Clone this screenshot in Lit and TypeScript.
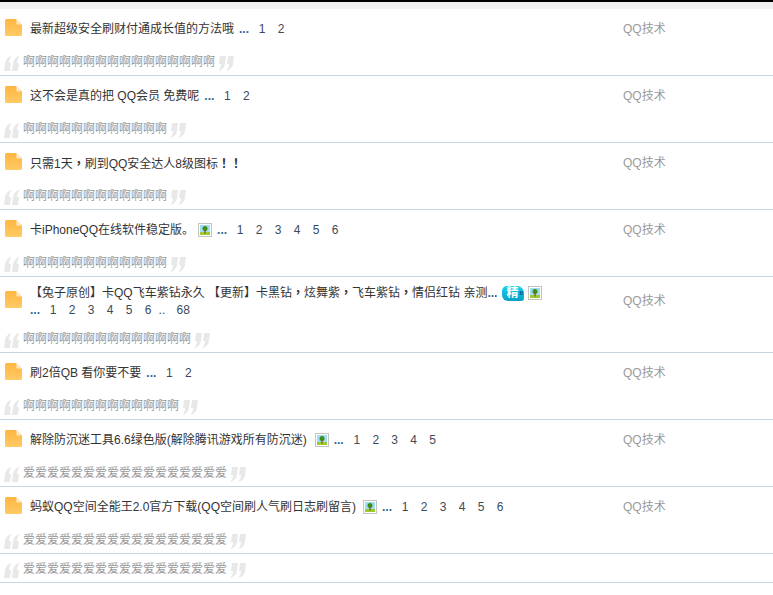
import { LitElement, html, css, svg } from "lit";
import { customElement } from "lit/decorators.js";

interface Row {
  title: string;
  ellipsis?: boolean;
  pic?: boolean;
  picGap?: number;
  badge?: boolean;
  pages?: string[];
  wrapPages?: boolean;
  quote: string;
  tall?: boolean;
}

const A = "啊";
const L = "爱";
const rows: Row[] = [
  { title: "最新超级安全刷财付通成长值的方法哦", pages: ["1", "2"], quote: A.repeat(16) },
  { title: "这不会是真的把 QQ会员 免费呢", pages: ["1", "2"], quote: A.repeat(12) },
  { title: "只需1天，刷到QQ安全达人8级图标！！", quote: A.repeat(12) },
  { title: "卡iPhoneQQ在线软件稳定版。", pic: true, picGap: 4, pages: ["1", "2", "3", "4", "5", "6"], quote: A.repeat(12) },
  {
    title: "【兔子原创】卡QQ飞车紫钻永久 【更新】卡黑钻，炫舞紫，飞车紫钻，情侣红钻 亲测",
    ellipsis: true,
    badge: true,
    pic: true,
    picGap: 4,
    wrapPages: true,
    tall: true,
    pages: ["1", "2", "3", "4", "5", "6", "..", "68"],
    quote: A.repeat(14),
  },
  { title: "刷2倍QB 看你要不要", pages: ["1", "2"], quote: A.repeat(13) },
  { title: "解除防沉迷工具6.6绿色版(解除腾讯游戏所有防沉迷)", pic: true, picGap: 8, pages: ["1", "2", "3", "4", "5"], quote: L.repeat(17) },
  { title: "蚂蚁QQ空间全能王2.0官方下载(QQ空间刷人气刷日志刷留言)", pic: true, picGap: 7, pages: ["1", "2", "3", "4", "5", "6"], quote: L.repeat(17) },
];

const openMark = "M0 15L1 7C1.500 4 4 1 7 0L7 1C5.500 3 5 5 5 7H7L6 15Z";
const quoteOpen = svg`<svg class="q" width="15" height="15" viewBox="0 0 15 15"><path d="${openMark}" fill="#e8e8e8"/><path d="${openMark}" transform="translate(8 0)" fill="#e8e8e8"/></svg>`;
const quoteClose = svg`<svg class="q" width="15" height="15" viewBox="0 0 15 15"><g transform="rotate(180 7.500 7.500)"><path d="${openMark}" fill="#e8e8e8"/><path d="${openMark}" transform="translate(8 0)" fill="#e8e8e8"/></g></svg>`;
const folder = svg`<svg class="folder" width="17" height="17" viewBox="0 0 17 17"><defs><linearGradient id="fg" x1="0" y1="0" x2="0" y2="1"><stop offset="0" stop-color="#ffb640"/><stop offset="1" stop-color="#ffca66"/></linearGradient></defs><path d="M1.500 0H11l6 5.500v10a1.500 1.500 0 0 1-1.500 1.500h-14A1.500 1.500 0 0 1 0 15.500v-14A1.500 1.500 0 0 1 1.500 0z" fill="url(#fg)"/><path d="M11.500 0.500L16.500 5.500h-5z" fill="#fdeccb"/></svg>`;
const pic = svg`<svg width="14" height="14" viewBox="0 0 14 14"><rect x=".5" y=".5" width="13" height="13" fill="#fff" stroke="#c4c4bc"/><rect x="2" y="2" width="10" height="7" fill="#9fdcf5"/><rect x="2" y="9" width="10" height="3" fill="#9acb30"/><circle cx="7" cy="5.500" r="2.500" fill="#3f8f17"/><rect x="6.300" y="7" width="1.400" height="3.500" fill="#8a5a20"/></svg>`;

@customElement("app-root")
export class AppRoot extends LitElement {
  static styles = css`
    :host {
      display: block;
      height: 595px;
      overflow: hidden;
      background: #fff;
      font: 12px/18px "Liberation Sans", "Noto Sans CJK SC", sans-serif;
      color: #333;
      border-top: 2px solid #000;
      box-sizing: border-box;
    }
    .strip { height: 7px; background: #f0f0f0; }
    .row {
      height: 66px;
      border-bottom: 1px solid #c5d5e3;
      display: flex;
      flex-direction: column;
      overflow: hidden;
    }
    .row.tall { height: 75px; }
    .row.short { height: 28px; justify-content: center; }
    .top {
      height: 38px;
      display: flex;
      align-items: center;
      padding-left: 5px;
      flex: none;
    }
    .tall .top { height: 46px; }
    .tall .quote { margin-top: 7px; }
    .folder { flex: none; margin-right: 8px; margin-top: -1px; }
    .subject { width: 593px; flex: none; padding-top: 2px; }
    .line { display: block; height: 18px; white-space: nowrap; }
    .author { color: #999; padding-top: 2px; }
    .picwrap { display: inline-block; vertical-align: -3px; height: 14px; line-height: 0; }
    .more { color: #369; font-weight: bold; margin-left: 5px; }
    .inline-more { color: #369; font-weight: bold; }
    .pg { margin-left: 12.300px; color: #3c4a5a; }
    .more + .pg { margin-left: 9.700px; }
    .pg.dots { margin-left: 7.300px; }
    .pg.dots + .pg { margin-left: 11.300px; }
    .wrapline .more { margin-left: 0; }
    .punct { font-family: "Noto Sans CJK TC", sans-serif; font-weight: bold; }
    .badge {
      display: inline-flex;
      align-items: center;
      vertical-align: 0;
      height: 15px;
      width: 22px;
      box-sizing: border-box;
      padding-left: 4px;
      margin-left: 5px;
      background: linear-gradient(#16d4e8, #0a9fc4);
      border-radius: 5px 7px 3px 6px;
      color: #fff;
      font-weight: bold;
      line-height: 15px;
      gap: 1px;
    }
    .badge small { font-size: 6px; color: #0a4a60; font-weight: bold; }
    .quote {
      flex: none;
      height: 18px;
      margin-top: 6px;
      display: flex;
      align-items: center;
      padding-left: 4px;
      color: #999;
      gap: 4px;
    }
    .short .quote { margin-top: 2px; }
    .q { flex: none; margin-top: 2px; }
  `;

  private pagesTpl(r: Row) {
    return html`<span class="more">...</span>${(r.pages ?? []).map(
      (p) => html`<span class="pg ${p === ".." ? "dots" : ""}">${p}</span>`
    )}`;
  }

  private titleTpl(title: string) {
    return title
      .split(/([，！])/)
      .map((part) => (part === "，" || part === "！" ? html`<span class="punct">${part}</span>` : part));
  }

  private quoteTpl(text: string) {
    return html`<div class="quote">${quoteOpen}<span>${text}</span>${quoteClose}</div>`;
  }

  render() {
    return html`<div class="strip"></div>
      ${rows.map(
        (r) => html`<div class="row ${r.tall ? "tall" : ""}">
          <div class="top">
            ${folder}
            <div class="subject">
              <span class="line"
                >${this.titleTpl(r.title)}${r.ellipsis
                  ? html`<span class="inline-more">...</span>`
                  : ""}${r.badge
                  ? html`<span class="badge">精<small>II</small></span>`
                  : ""}${r.pic
                  ? html`<span class="picwrap" style="margin-left:${r.picGap}px">${pic}</span>`
                  : ""}${r.wrapPages ? "" : r.pages ? this.pagesTpl(r) : ""}</span
              >
              ${r.wrapPages ? html`<span class="line wrapline">${this.pagesTpl(r)}</span>` : ""}
            </div>
            <span class="author">QQ技术</span>
          </div>
          ${this.quoteTpl(r.quote)}
        </div>`
      )}
      <div class="row short">${this.quoteTpl(L.repeat(17))}</div>`;
  }
}
